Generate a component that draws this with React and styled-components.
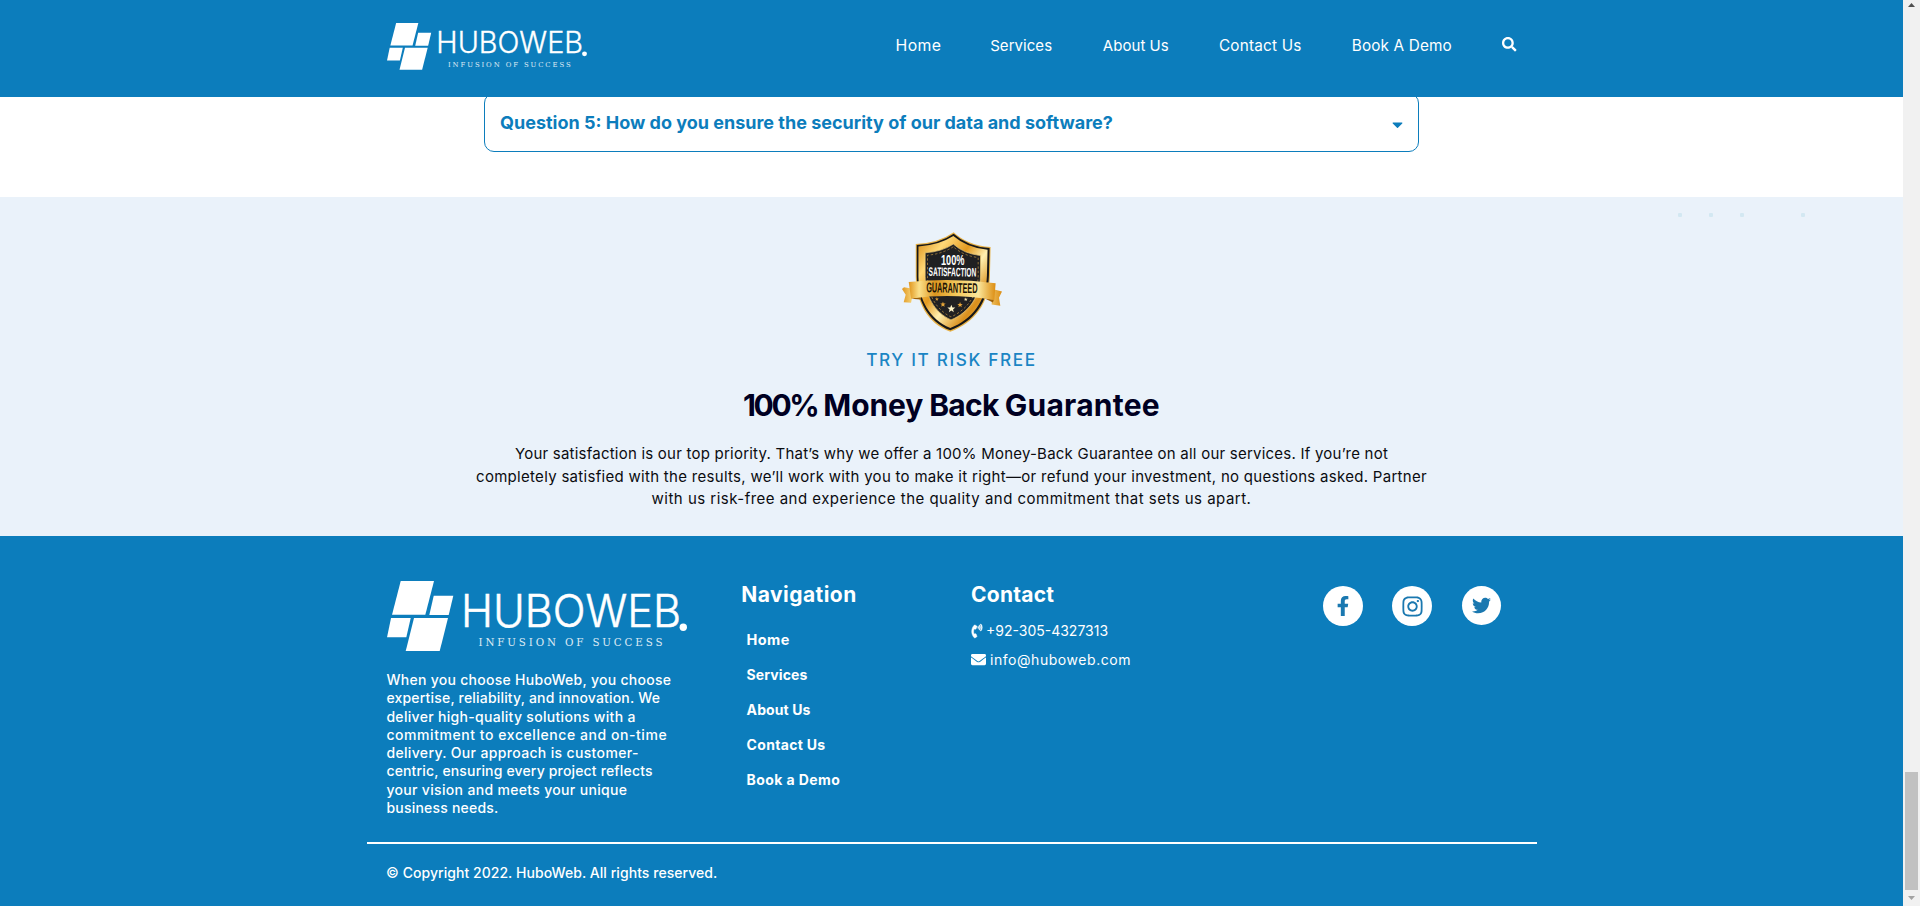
import React from "react";
import styled, { createGlobalStyle } from "styled-components";
import { FaSearch, FaPhoneVolume, FaEnvelope, FaFacebookF, FaInstagram, FaTwitter, FaCaretDown } from "react-icons/fa";

const blue = "#0c7dbc";

const GlobalStyle = createGlobalStyle`
  * { box-sizing: border-box; }
  html, body { margin: 0; height: 906px; overflow: hidden; background: #fff; }
  body { font-family: Inter, "Open Sans", sans-serif; }
  ul { list-style: none; margin: 0; padding: 0; }
  h2, h3, p { margin: 0; }
  a { color: inherit; text-decoration: none; }
  svg { display: block; flex: none; overflow: visible; }
`;

const Window = styled.div`
  display: flex;
  width: 1920px;
  height: 906px;
`;

const Page = styled.div`
  width: 1903px;
  display: flex;
  flex-direction: column;
`;

const Header = styled.header`
  height: 97px;
  flex: none;
  background: ${blue};
  display: flex;
  align-items: flex-start;
  padding: 23px 0 0 387px;
  z-index: 1;
`;

const NavBar = styled.nav`
  display: grid;
  grid-template-columns: 94.6px 112.6px 116.2px 132.8px 150px 16px;
  margin: 12.5px 0 0 308.6px;
  line-height: 20px;
  font-size: 15px;
  color: #fff;
`;

const Tracked = styled.span`
  letter-spacing: ${(p) => p.$track || 0}px;
  font-size: ${(p) => (p.$size ? `${p.$size}px` : "inherit")};
  white-space: nowrap;
`;

const SearchButton = styled.a`
  padding-top: 1px;
  svg { width: 14.5px; height: 14.5px; }
`;

const Faq = styled.section`
  height: 100px;
  flex: none;
`;

const FaqItem = styled.div`
  width: 935px;
  height: 59px;
  margin: -4px 0 0 484px;
  border: 1px solid ${blue};
  border-radius: 10px;
  padding: 17px 12px 0 15px;
  display: flex;
  justify-content: space-between;
  color: ${blue};
  font-size: 18px;
  font-weight: 700;
  line-height: 24px;
  svg { margin-top: 5px; }
`;

const Guarantee = styled.section`
  height: 339px;
  flex: none;
  background: #eaf2fa;
  display: flex;
  flex-direction: column;
  align-items: center;
  padding-top: 35px;
  position: relative;
`;

const Dots = styled.div`
  position: absolute;
  top: 16px;
  left: 1678px;
  display: grid;
  grid-template-columns: 31px 31px 61px 4px;
`;

const Dot = styled.i`
  width: 4px;
  height: 4px;
  border-radius: 1px;
  background: #d3e8f2;
`;

const Eyebrow = styled.div`
  margin-top: 18px;
  font-size: 17.2px;
  font-weight: 500;
  line-height: 20px;
  letter-spacing: 1.65px;
  color: #1a85c4;
`;

const Title = styled.h2`
  display: flex;
  gap: 6px;
  margin-top: 16px;
  font-size: 30px;
  font-weight: 700;
  line-height: 38px;
  color: #000022;
`;

const Lines = styled.p`
  display: flex;
  flex-direction: column;
  font-size: ${(p) => p.$size}px;
  line-height: ${(p) => p.$leading}px;
  font-weight: ${(p) => p.$weight};
`;

const Pitch = styled(Lines)`
  margin-top: 19px;
  align-items: center;
  color: #0b0c10;
`;

const Footer = styled.footer`
  flex: 1;
  background: ${blue};
  color: #fff;
  padding-top: 45px;
`;

const Columns = styled.div`
  display: grid;
  grid-template-columns: 354.3px 229.7px 352px auto;
  margin-left: 387px;
  height: 261px;
`;

const About = styled(Lines)`
  margin: 20.3px 0 0 -0.6px;
`;

const Heading = styled.h3`
  padding-top: 2px;
  margin-bottom: -1px;
  font-size: 21px;
  font-weight: 700;
  line-height: 24px;
  letter-spacing: ${(p) => p.$track}px;
`;

const FooterLinks = styled.ul`
  padding: 16px 0 0 5.3px;
  font-size: 14px;
  font-weight: 700;
  li { height: 35px; line-height: 35px; }
`;

const ContactRow = styled.div`
  display: flex;
  align-items: center;
  gap: ${(p) => p.$gap}px;
  height: 29px;
  font-size: 14px;
`;

const PhoneIcon = styled(FaPhoneVolume)`
  width: 14px;
  height: 14px;
  margin-left: -1px;
  stroke: currentColor;
  stroke-width: 18px;
`;

const ContactList = styled.div`
  padding-top: 10px;
`;

const Socials = styled.div`
  display: flex;
  gap: 29.5px;
  padding-top: 5px;
`;

const Social = styled.a`
  width: ${(p) => p.$d}px;
  height: ${(p) => p.$d}px;
  border-radius: 50%;
  background: #fff;
  color: #1a78b0;
  display: flex;
  align-items: center;
  justify-content: center;
`;

const Copyright = styled.div`
  width: 1170px;
  margin-left: 367px;
  border-top: 2px solid #fff;
  padding: 19px 19px 0;
  font-size: 14px;
  font-weight: 500;
  line-height: 20px;
`;

const ScrollTrack = styled.div`
  width: 17px;
  background: #f1f1f1;
  display: flex;
  flex-direction: column;
  align-items: center;
  padding: 3px 0 6px;
`;

const Thumb = styled.div`
  width: 13px;
  height: 118px;
  margin: auto 0 6px;
  background: #c1c1c1;
`;

function Logo({ width }) {
  return (
    <svg width={width} height={width * 0.2333} viewBox="0 0 300 70" fill="#fff">
      <polygon points="13.7,0 47,0 38.3,33.7 5,33.7" />
      <polygon points="46.7,14.7 66.3,14.7 61.7,34 42.3,34" />
      <polygon points="4,37 23.7,37 19.3,56.3 0,56.3" />
      <polygon points="27,37 61,37 52.7,70 18.7,70" />
      <text x="74" y="45.7" fontFamily="Inter, sans-serif" fontWeight="300" fontSize="44.5" textLength="220" lengthAdjust="spacingAndGlyphs" stroke="#fff" strokeWidth="0.5">HUBOWEB</text>
      <circle cx="296.3" cy="46.3" r="3.7" />
      <text x="91.5" y="65.3" fontFamily="'DejaVu Serif', serif" fontSize="10.3" textLength="184" opacity="0.85">INFUSION OF SUCCESS</text>
    </svg>
  );
}

const star = "0,-10 2.6,-3.2 9.5,-3.1 4.1,1.3 5.9,8.1 0,4.2 -5.9,8.1 -4.1,1.3 -9.5,-3.1 -2.6,-3.2";

function Badge() {
  return (
    <svg width="100" height="100" viewBox="127 37 298 298" fontFamily="'Liberation Sans Narrow', 'Liberation Sans', sans-serif" fontWeight="700">
      <defs>
        <linearGradient id="gold" x1="0" y1="0" x2="1" y2="1">
          <stop offset="0" stopColor="#d88a12" />
          <stop offset=".22" stopColor="#ffd978" />
          <stop offset=".42" stopColor="#e39a20" />
          <stop offset=".58" stopColor="#fff0b0" />
          <stop offset=".78" stopColor="#d98f1c" />
          <stop offset="1" stopColor="#f8cf68" />
        </linearGradient>
        <linearGradient id="ribbon" x1="0" x2="1">
          <stop offset="0" stopColor="#e0951c" />
          <stop offset=".12" stopColor="#fbe08a" />
          <stop offset=".3" stopColor="#dc961f" />
          <stop offset=".55" stopColor="#f4c95c" />
          <stop offset=".8" stopColor="#fbe79c" />
          <stop offset="1" stopColor="#dc8d12" />
        </linearGradient>
      </defs>
      <path d="M281 38Q236 70 168 73V170C169 244 202 309 271 334C344 307 387 248 389 168L391 82Q322 77 281 38Z" fill="#e7b145" />
      <path d="M281 42Q236 73 171 76V170C172 242 205 304 271 330C341 304 384 246 386 168L388 85Q322 80 281 42Z" fill="#181818" />
      <path d="M280 49Q236 77 176 80V170C177 236 208 297 271 323C336 298 378 242 380 168L382 90Q322 85 280 49Z" fill="url(#gold)" />
      <path d="M280 73Q245 96 196 99V170C196 225 222 276 273 299C327 277 360 228 361 168V107Q312 102 280 73Z" fill="#202022" stroke="#f5d27b" strokeWidth="2" />
      <path d="M280 81Q245 103 203 106V170C203 220 227 268 273 290C321 269 353 224 354 168V113Q310 108 280 81Z" fill="none" stroke="#c99a43" strokeWidth="2" strokeDasharray="7 6" />
      <path d="M133 202L163 207L154 248L132 246L138 224L127 207ZM396 207L425 214L416 233L420 257L394 253Z" fill="url(#ribbon)" />
      <path d="M154 236L184 229L183 238ZM374 235L401 238L398 247Z" fill="#9d5f07" />
      <path d="M147 186Q277 173 406 190L402 240Q278 219 154 235Z" fill="url(#ribbon)" />
      <text x="243" y="136" fill="#fff" fontSize="42" textLength="70" lengthAdjust="spacingAndGlyphs">100%</text>
      <text x="206" y="169" fill="#fff" fontSize="37" textLength="142" lengthAdjust="spacingAndGlyphs" transform="rotate(1 277 170)">SATISFACTION</text>
      <text x="199" y="218" fill="#1c1405" fontSize="42" textLength="153" lengthAdjust="spacingAndGlyphs" transform="rotate(1 277 214)">GUARANTEED</text>
      <polygon points={star} fill="#fff4c8" transform="translate(274 266) scale(1.25)" />
      <polygon points={star} fill="#e5a437" transform="translate(249 253) scale(.85)" />
      <polygon points={star} fill="#e5a437" transform="translate(300 254) scale(.85)" />
      <polygon points={star} fill="#d99a35" transform="translate(231 237) scale(.6)" />
      <polygon points={star} fill="#f4e4b0" transform="translate(317 238) scale(.6)" />
    </svg>
  );
}

const navItems = [["Home", 0.4, 15.8], ["Services", 0.05], ["About Us", 0.05], ["Contact Us", 0.2, 15.3], ["Book A Demo", 0.15, 15.3]];

const titleWords = [["100%", -2.4], ["Money", -0.1], ["Back", -0.7], ["Guarantee", 0.25]];

const pitch = [
  ["Your satisfaction is our top priority. That’s why we offer a 100% Money-Back Guarantee on all our services. If you’re not", 0.224],
  ["completely satisfied with the results, we’ll work with you to make it right—or refund your investment, no questions asked. Partner", 0.295],
  ["with us risk-free and experience the quality and commitment that sets us apart.", 0.481],
];

const about = [
  ["When you choose HuboWeb, you choose", 0.281],
  ["expertise, reliability, and innovation. We", 0.185],
  ["deliver high-quality solutions with a", 0.306],
  ["commitment to excellence and on-time", 0.56],
  ["delivery. Our approach is customer-", 0.345],
  ["centric, ensuring every project reflects", 0.163],
  ["your vision and meets your unique", 0.326],
  ["business needs.", 0.217],
];

const footerItems = [["Home", 0.4, 14.5], ["Services", 0.11], ["About Us", 0.1], ["Contact Us", 0.31], ["Book a Demo", 0.4]];

const renderLines = (lines) => lines.map(([text, track]) => <Tracked key={text} $track={track}>{text}</Tracked>);

export default function App() {
  return (
    <Window>
      <GlobalStyle />
      <Page>
        <Header>
          <Logo width={200} />
          <NavBar>
            {navItems.map(([text, track, size]) => (
              <a href="#" key={text}><Tracked $track={track} $size={size}>{text}</Tracked></a>
            ))}
            <SearchButton href="#"><FaSearch /></SearchButton>
          </NavBar>
        </Header>
        <Faq>
          <FaqItem>
            <span>Question 5: How do you ensure the security of our data and software?</span>
            <FaCaretDown size={17} />
          </FaqItem>
        </Faq>
        <Guarantee>
          <Dots><Dot /><Dot /><Dot /><Dot /></Dots>
          <Badge />
          <Eyebrow>TRY IT RISK FREE</Eyebrow>
          <Title>{renderLines(titleWords)}</Title>
          <Pitch $size={15} $leading={22.5} $weight={400}>{renderLines(pitch)}</Pitch>
        </Guarantee>
        <Footer>
          <Columns>
            <div>
              <Logo width={300} />
              <About $size={14} $leading={18.2} $weight={500}>{renderLines(about)}</About>
            </div>
            <div>
              <Heading $track={0.45}>Navigation</Heading>
              <FooterLinks>
                {footerItems.map(([text, track, size]) => (
                  <li key={text}><a href="#"><Tracked $track={track} $size={size}>{text}</Tracked></a></li>
                ))}
              </FooterLinks>
            </div>
            <div>
              <Heading $track={0.25}>Contact</Heading>
              <ContactList>
                <ContactRow $gap={2}><PhoneIcon /><Tracked>+92-305-4327313</Tracked></ContactRow>
                <ContactRow $gap={4}><FaEnvelope size={15} /><Tracked $track={0.55}>info@huboweb.com</Tracked></ContactRow>
              </ContactList>
            </div>
            <Socials>
              <Social href="#" $d={40}><FaFacebookF size={20} /></Social>
              <Social href="#" $d={40}><FaInstagram size={23} /></Social>
              <Social href="#" $d={39}><FaTwitter size={19} /></Social>
            </Socials>
          </Columns>
          <Copyright><Tracked $track={0.05}>© Copyright 2022. HuboWeb. All rights reserved.</Tracked></Copyright>
        </Footer>
      </Page>
      <ScrollTrack>
        <svg width="7" height="4" viewBox="0 0 7 4"><path d="M0 4L3.5 0L7 4Z" fill="#505050" /></svg>
        <Thumb />
        <svg width="7" height="4" viewBox="0 0 7 4"><path d="M0 0L3.5 4L7 0Z" fill="#a3a3a3" /></svg>
      </ScrollTrack>
    </Window>
  );
}
